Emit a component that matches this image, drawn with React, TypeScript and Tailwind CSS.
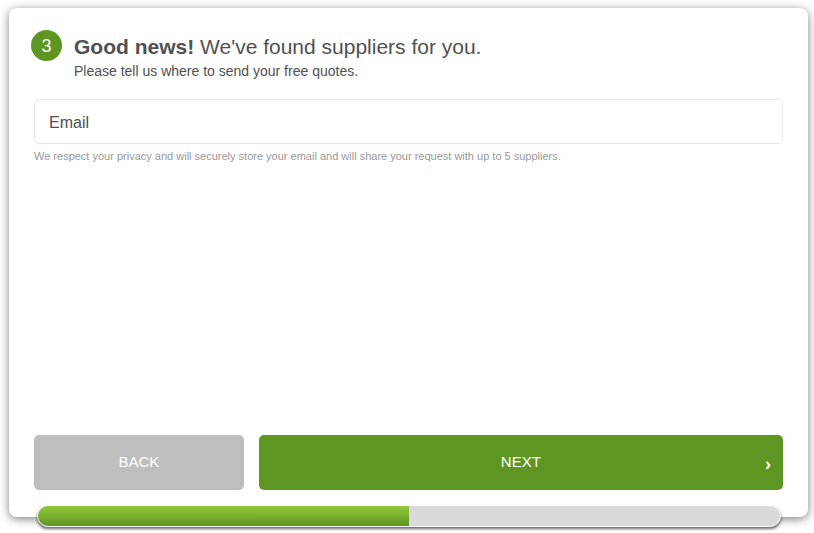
const STEP = 3;
const PROGRESS = 50;

function StepHeader() {
  return (
    <header className="-ml-[3px] flex items-start gap-3">
      <span className="flex size-[31px] shrink-0 items-center justify-center rounded-full bg-[#5e9622] text-lg text-white">
        {STEP}
      </span>
      <div className="pt-1">
        <h1 className="text-[21px] leading-[26px]">
          <strong className="font-bold">Good news!</strong> We've found suppliers for you.
        </h1>
        <p className="text-sm leading-[22px]">Please tell us where to send your free quotes.</p>
      </div>
    </header>
  );
}

function EmailField() {
  return (
    <div className="mt-[17px]">
      <div className="relative">
        <input
          id="email"
          type="email"
          placeholder=" "
          aria-describedby="privacy"
          className="peer block h-[45px] w-full rounded-[5px] border border-[#e8e8e8] bg-white px-[14px] pt-3 text-base outline-none"
        />
        <label
          htmlFor="email"
          className="pointer-events-none absolute top-3 left-[15px] text-base peer-[:not(:placeholder-shown)]:top-0 peer-[:not(:placeholder-shown)]:text-xs"
        >
          Email
        </label>
      </div>
      <p id="privacy" className="mt-1 text-[11px] leading-4 text-[#999999]">
        We respect your privacy and will securely store your email and will share your request with up to 5 suppliers.
      </p>
    </div>
  );
}

function Actions() {
  return (
    <div className="mt-auto flex gap-[15px] text-[15px] text-white">
      <button type="button" className="h-[55px] w-[28%] shrink-0 rounded-[5px] bg-[#bebebe]">
        BACK
      </button>
      <button type="submit" className="relative h-[55px] flex-1 rounded-[5px] bg-[#5e9622]">
        NEXT
        <span aria-hidden="true" className="absolute inset-y-0 right-3 flex items-center pt-[2px] text-lg font-bold">
          ›
        </span>
      </button>
    </div>
  );
}

function ProgressBar() {
  return (
    <div
      role="progressbar"
      aria-label="Form progress"
      aria-valuenow={PROGRESS}
      aria-valuemin={0}
      aria-valuemax={100}
      className="mr-[2px] -mb-[10px] ml-[3px] mt-[15px] h-[22px] shrink-0 overflow-hidden rounded-full border border-white bg-[#dadada] shadow-[0_2px_3px_rgba(0,0,0,0.6)]"
    >
      <div className="h-full bg-linear-to-b from-[#92c83a] to-[#5e9622]" style={{ width: `${PROGRESS}%` }} />
    </div>
  );
}

export default function App() {
  return (
    <main className="flex min-h-screen flex-col bg-white pt-2 pr-[6px] pb-4 pl-[9px] font-['Liberation_Sans',Arial,sans-serif] text-[#505050]">
      <form
        onSubmit={(event) => event.preventDefault()}
        className="flex flex-1 flex-col rounded-lg bg-white px-[25px] pt-[22px] shadow-[0_2px_10px_rgba(0,0,0,0.5)]"
      >
        <StepHeader />
        <EmailField />
        <Actions />
        <ProgressBar />
      </form>
    </main>
  );
}
